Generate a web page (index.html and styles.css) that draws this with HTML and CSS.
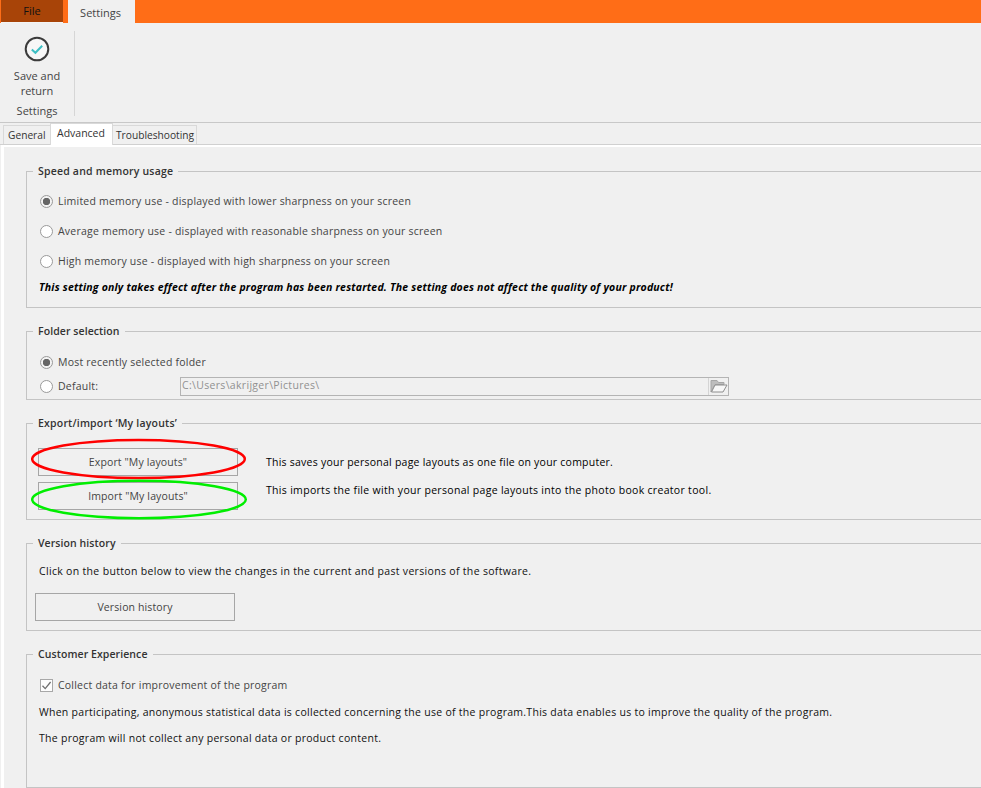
FILE: index.html
```html
<!DOCTYPE html>
<html lang="en">
<head>
<meta charset="utf-8">
<title>Settings</title>
<link rel="stylesheet" href="styles.css">
</head>
<body>
<header class="menubar">
  <div class="menu-file">File</div>
  <div class="menu-settings">Settings</div>
</header>
<section class="ribbon">
  <div class="ribbon-group">
    <div class="ribbon-button">
      <svg class="ribbon-icon" width="26" height="26" viewBox="0 0 26 26">
        <circle cx="13" cy="13" r="11.3" fill="#f7f7f7" stroke="#3b3b3b" stroke-width="2"/>
        <path d="M7.8 13.4 L11.4 16.8 L18.2 9.8" fill="none" stroke="#3dbfc4" stroke-width="2"/>
      </svg>
      <span>Save and<br>return</span>
    </div>
    <div class="ribbon-label">Settings</div>
  </div>
</section>
<nav class="tabs">
  <div class="tab">General</div>
  <div class="tab tab-active">Advanced</div>
  <div class="tab">Troubleshooting</div>
</nav>
<main class="panel">
  <fieldset class="group group-speed">
    <legend class="legend-wide">Speed and memory usage</legend>
    <div class="option option-tall"><span class="radio radio-on"></span>Limited memory use - displayed with lower sharpness on your screen</div>
    <div class="option option-tall"><span class="radio"></span>Average memory use - displayed with reasonable sharpness on your screen</div>
    <div class="option option-tall"><span class="radio"></span>High memory use - displayed with high sharpness on your screen</div>
    <p class="note">This setting only takes effect after the program has been restarted. The setting does not affect the quality of your product!</p>
  </fieldset>

  <fieldset class="group group-folder">
    <legend>Folder selection</legend>
    <div class="option"><span class="radio radio-on"></span>Most recently selected folder</div>
    <div class="option folder-row">
      <span class="radio"></span><span class="folder-label">Default:</span>
      <div class="path-field">
        <span class="path-text">C:\Users\akrijger\Pictures\</span>
        <span class="path-button">
          <svg width="18" height="14" viewBox="0 0 18 14">
            <path d="M1 13V1.5H7L8.5 3.5H14V5.5H5L1 13Z" fill="#bdbdbd" stroke="#a6a6a6"/>
            <path d="M1.5 13L5 6H17L13 13Z" fill="#f7f7f7" stroke="#8e8e8e"/>
          </svg>
        </span>
      </div>
    </div>
  </fieldset>

  <fieldset class="group group-export">
    <legend class="legend-wide">Export/import ‘My layouts’</legend>
    <div class="export-layout">
      <div class="export-buttons">
        <div class="button button-layout">Export "My layouts"</div>
        <div class="button button-layout">Import "My layouts"</div>
        <svg class="ring ring-red" width="218" height="44" viewBox="0 0 218 44">
          <ellipse cx="107.5" cy="22" rx="106.3" ry="19" fill="none" stroke="#ff0000" stroke-width="2.5"/>
        </svg>
        <svg class="ring ring-green" width="220" height="44" viewBox="0 0 220 44">
          <ellipse cx="108" cy="21.5" rx="106.8" ry="18.7" fill="none" stroke="#00ee00" stroke-width="2.5"/>
        </svg>
      </div>
      <div class="export-text">
        <p class="export-save">This saves your personal page layouts as one file on your computer.</p>
        <p>This imports the file with your personal page layouts into the photo book creator tool.</p>
      </div>
    </div>
  </fieldset>

  <fieldset class="group group-version">
    <legend>Version history</legend>
    <p class="body-text version-text">Click on the button below to view the changes in the current and past versions of the software.</p>
    <div class="button button-version">Version history</div>
  </fieldset>

  <fieldset class="group group-customer">
    <legend>Customer Experience</legend>
    <div class="option"><span class="checkbox">
      <svg width="11" height="11" viewBox="0 0 11 11"><path d="M1.5 5.8L4.2 8.6L9.6 2" fill="none" stroke="#6e6e6e" stroke-width="1.3"/></svg>
    </span>Collect data for improvement of the program</div>
    <p class="body-text customer-text">When participating, anonymous statistical data is collected concerning the use of the program.This data enables us to improve the quality of the program.</p>
    <p class="body-text customer-text-2">The program will not collect any personal data or product content.</p>
  </fieldset>
</main>
</body>
</html>
```
FILE: styles.css
```css
* { box-sizing: border-box; }
html, body { margin: 0; height: 100%; }
body {
  width: 981px;
  height: 788px;
  overflow: hidden;
  background: #f0f0f0;
  font-family: "Open Sans", "Noto Sans", sans-serif;
  font-size: 10.5px;
  color: #1a1a1a;
}
p { margin: 0; }

.menubar {
  display: flex;
  height: 23px;
  background: #ff6d17;
  padding-left: 1px;
  font-size: 11px;
}
.menu-file {
  width: 62px;
  height: 23px;
  background: #a84408;
  border-bottom: 1px solid #f4f4f4;
  color: #111;
  text-align: center;
  line-height: 21px;
}
.menu-settings {
  margin-left: 5px;
  width: 67px;
  background: #f0f0f0;
  color: #444;
  text-align: center;
  line-height: 25px;
  padding-right: 2px;
}

.ribbon {
  height: 100px;
  border-bottom: 1px solid #c8c8c8;
  padding-top: 8px;
}
.ribbon-group {
  width: 75px;
  height: 85px;
  border-right: 1px solid #d6d6d6;
  display: flex;
  flex-direction: column;
  align-items: center;
  color: #444;
  font-size: 11px;
}
.ribbon-button {
  display: flex;
  flex-direction: column;
  align-items: center;
  text-align: center;
  line-height: 15px;
}
.ribbon-icon { margin-top: 5px; margin-bottom: 6px; }
.ribbon-label { line-height: 15px; margin-top: 5px; }

.tabs {
  display: flex;
  align-items: flex-end;
  height: 22px;
  padding-left: 2px;
  border-bottom: 1px solid #d0d0d0;
  color: #333;
  font-size: 10.2px;
}
.tab {
  height: 19px;
  line-height: 18px;
  padding: 0 3px 0 5px;
  background: #f0f0f0;
  border: 1px solid #d9d9d9;
  border-bottom: 0;
  margin-left: -1px;
  white-space: nowrap;
}
.tab:first-child { margin-left: 1px; width: 48px; padding-left: 4px; }
.tab-active {
  height: 22px;
  width: 63px;
  background: #fff;
  margin-bottom: -1px;
  padding-bottom: 3px;
  padding-left: 6px;
  font-size: 10.5px;
}
.tab:last-child { width: 85px; padding-left: 3px; }

.panel {
  height: 643px;
  padding: 18px 0 0 22px;
  border-top: 2px solid #fff;
  border-left: 3px solid #fff;
  margin-left: 1px;
  overflow: hidden;
}

.group {
  width: 1000px;
  margin: 0 0 16px;
  padding: 0;
  min-width: 0;
  border: 1px solid #c4c4c4;
}
.group legend {
  margin-left: 6px;
  padding: 0 5px;
  height: 15px;
  line-height: 15px;
  font-weight: 600;
  color: #333;
  letter-spacing: 0.08px;
}
.group .legend-wide { letter-spacing: 0.2px; }
.group-speed { height: 144px; padding-top: 7px; margin-top: -1px; }
.group-folder { height: 76px; padding-top: 12px; }
.group-export { height: 104px; padding-top: 17px; }
.group-version { height: 95px; padding-top: 13px; }
.group-customer { height: 141px; padding-top: 12px; }

.option {
  display: flex;
  align-items: center;
  height: 22px;
  padding-left: 13px;
  color: #444;
  letter-spacing: 0.22px;
}
.option-tall { height: 30px; }
.radio {
  flex: none;
  width: 13px;
  height: 13px;
  margin-right: 5px;
  border: 1px solid #9a9a9a;
  border-radius: 50%;
  background: #fff;
}
.radio-on {
  background: radial-gradient(circle, #666 0, #666 3.4px, #f3f3f3 4px);
}
.checkbox {
  flex: none;
  width: 13px;
  height: 13px;
  margin-right: 5px;
  border: 1px solid #a8a8a8;
  background: #fdfdfd;
  display: flex;
  align-items: center;
  justify-content: center;
}
.note {
  height: 22px;
  line-height: 22px;
  padding-left: 12px;
  font-weight: 700;
  font-style: italic;
  color: #000;
  letter-spacing: 0.2px;
  white-space: nowrap;
}

.folder-row { margin-top: 2px; }
.folder-label { width: 122px; }
.path-field {
  display: flex;
  width: 549px;
  height: 19px;
  border: 1px solid #b4b4b4;
}
.path-text {
  flex: 1;
  padding-left: 1px;
  line-height: 15px;
  color: #909090;
  letter-spacing: 0.32px;
}
.path-button {
  width: 20px;
  border-left: 1px solid #d4d4d4;
  display: flex;
  align-items: center;
  justify-content: center;
}

.export-layout { display: flex; padding-left: 11px; }
.export-buttons {
  position: relative;
  width: 200px;
  display: flex;
  flex-direction: column;
  gap: 6px;
}
.button {
  display: flex;
  align-items: center;
  justify-content: center;
  border: 1px solid #a6a6a6;
  color: #444;
  letter-spacing: 0.13px;
}
.button-layout { height: 28px; }
.ring { position: absolute; }
.ring-red { left: -7px; top: -11px; }
.ring-green { left: -7px; top: 30px; }
.export-text {
  margin-left: 28px;
  padding-top: 7px;
  display: flex;
  flex-direction: column;
  gap: 13px;
  color: #000;
  line-height: 15px;
  letter-spacing: 0.31px;
}
.export-save { letter-spacing: 0.24px; }

.body-text {
  padding-left: 12px;
  line-height: 15px;
  color: #111;
  letter-spacing: 0.28px;
  white-space: nowrap;
}
.version-text { letter-spacing: 0.32px; }
.button-version {
  width: 200px;
  height: 28px;
  margin: 14px 0 0 8px;
}
.customer-text { margin-top: 9px; }
.customer-text-2 { margin-top: 11px; }
```
